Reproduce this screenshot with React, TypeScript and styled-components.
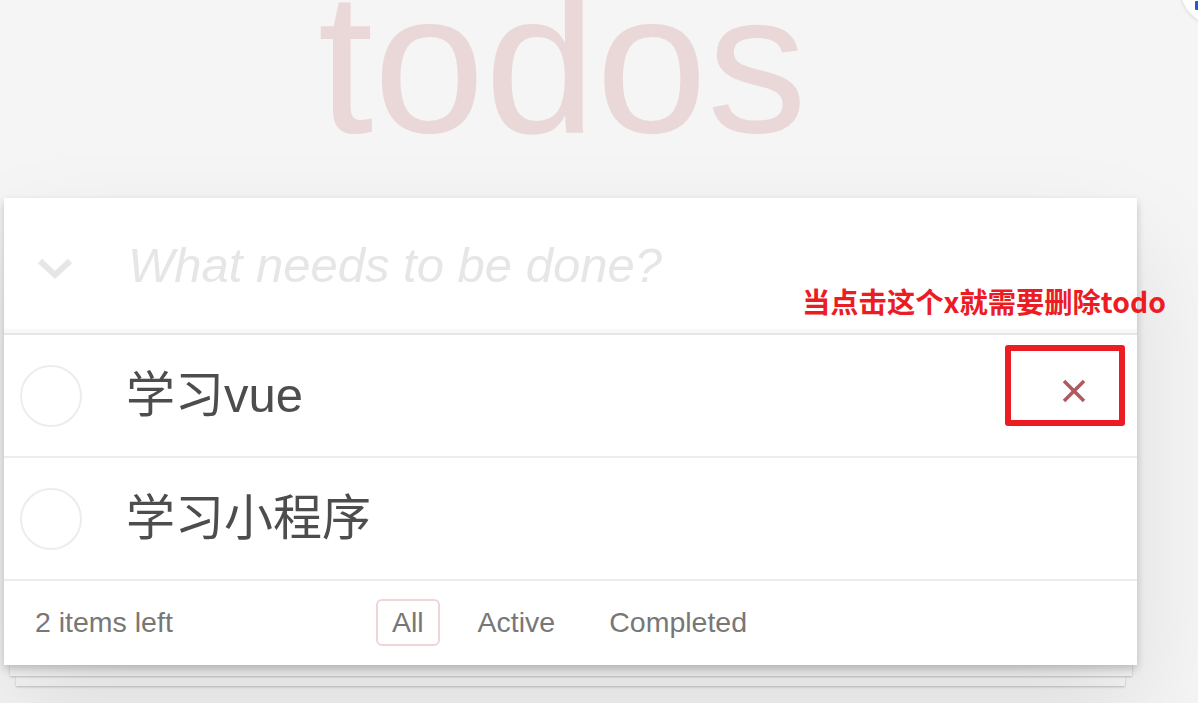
import React from "react";
import styled, { createGlobalStyle } from "styled-components";

const GlobalStyle = createGlobalStyle`
  html, body {
    margin: 0;
    padding: 0;
    background: #f5f5f5;
    overflow: hidden;
  }
  body {
    font-family: "Liberation Sans", Arial, "Noto Sans CJK SC", sans-serif;
    color: #4d4d4d;
  }
  * { box-sizing: border-box; }
`;

const Page = styled.div`
  position: relative;
  width: 1198px;
  height: 703px;
  padding-left: 4px;
  overflow: hidden;
`;

const Title = styled.h1`
  margin: 0 0 73px;
  width: 1133px;
  height: 125px;
  line-height: 125px;
  font-size: 200px;
  font-weight: 400;
  text-align: center;
  padding-right: 16px;
  color: rgba(175, 47, 47, 0.15);
  font-family: "Liberation Sans", Arial, sans-serif;
`;

const Card = styled.section`
  position: relative;
  z-index: 3;
  width: 1133px;
  background: #fff;
  box-shadow: 0 4px 8px rgba(0, 0, 0, 0.2), 0 50px 100px rgba(0, 0, 0, 0.1);
`;

const Header = styled.header`
  height: 135px;
  display: flex;
  align-items: center;
  box-shadow: inset 0 -4px 2px rgba(0, 0, 0, 0.03);
`;

const ToggleAll = styled.span`
  width: 124px;
  flex: none;
  display: flex;
  padding-left: 33px;
  padding-top: 6px;
`;

const NewTodo = styled.input`
  flex: 1;
  border: none;
  outline: none;
  background: transparent;
  padding: 0;
  font-family: "Liberation Sans", Arial, sans-serif;
  font-size: 49px;
  line-height: 1.4;
  color: #4d4d4d;
  &::placeholder {
    font-style: italic;
    color: #e6e6e6;
  }
`;

const List = styled.ul`
  list-style: none;
  margin: 0;
  padding: 0;
  border-top: 2px solid #e6e6e6;
`;

const Item = styled.li`
  height: 123px;
  border-bottom: 2px solid #ededed;
  display: flex;
  align-items: center;
  padding: 0 51px 0 16px;
`;

const Check = styled.span`
  width: 62px;
  height: 62px;
  flex: none;
  border: 2px solid #ededed;
  border-radius: 50%;
`;

const Label = styled.label`
  flex: 1;
  margin-left: 44px;
  font-size: 49px;
  line-height: 1.2;
  color: #4d4d4d;
  font-family: "Liberation Sans", Arial, "Noto Sans CJK SC", sans-serif;
`;

const Destroy = styled.button`
  border: none;
  background: none;
  padding: 0;
  margin: 0 0 10px;
  display: flex;
  cursor: pointer;
`;

const Footer = styled.footer`
  height: 84px;
  display: grid;
  grid-template-columns: 1fr auto 1fr;
  align-items: center;
  padding: 0 31px 2px;
  font-size: 28.5px;
  color: #777;
`;

const Count = styled.span`
  justify-self: start;
`;

const Filters = styled.ul`
  list-style: none;
  margin: 0 0 0 -2px;
  padding: 0;
  display: flex;
  gap: 22px;
`;

const FilterLink = styled.a<{ $selected?: boolean }>`
  display: block;
  padding: 5px 14px;
  line-height: 33px;
  border: 2px solid ${(p) => (p.$selected ? "rgba(175, 47, 47, 0.2)" : "transparent")};
  border-radius: 6px;
  color: #777;
  text-decoration: none;
`;

const Sheet = styled.div<{ $left: number; $width: number; $height: number; $z: number }>`
  position: relative;
  z-index: ${(p) => p.$z};
  margin-left: ${(p) => p.$left}px;
  width: ${(p) => p.$width}px;
  height: ${(p) => p.$height}px;
  background: #f7f7f7;
  box-shadow: 0 1px 2px rgba(0, 0, 0, 0.22);
`;

const MarkBox = styled.div`
  position: absolute;
  z-index: 10;
  left: 1005px;
  top: 345px;
  width: 120px;
  height: 81px;
  border: 6px solid #ec1c24;
  border-radius: 3px;
`;

const MarkText = styled.div`
  position: absolute;
  z-index: 10;
  left: 802px;
  top: 285px;
  font-family: "Noto Sans CJK SC", sans-serif;
  font-weight: 700;
  font-size: 28.3px;
  line-height: 32px;
  color: #ec1c24;
  white-space: nowrap;
`;

const Widget = styled.div`
  position: absolute;
  z-index: 10;
  left: 1181px;
  top: -44px;
  width: 68px;
  height: 68px;
  border-radius: 50%;
  background: #fff;
  box-shadow: 0 1px 4px rgba(0, 0, 0, 0.12);
`;

const WidgetMark = styled.span`
  position: absolute;
  left: 14px;
  top: 45px;
  width: 4px;
  height: 9px;
  background: #1d5fd0;
  border-radius: 1px;
`;

const Chevron = () => (
  <svg width="36" height="22" viewBox="0 0 36 22">
    <polyline points="3,3 18,17 33,3" fill="none" stroke="#e6e6e6" strokeWidth="6" />
  </svg>
);

const XIcon = () => (
  <svg width="24" height="24" viewBox="0 0 24 24">
    <line x1="2" y1="2" x2="22" y2="22" stroke="#af5b5e" strokeWidth="3.6" />
    <line x1="22" y1="2" x2="2" y2="22" stroke="#af5b5e" strokeWidth="3.6" />
  </svg>
);

const todos = [
  { id: 1, title: "学习vue", hover: true },
  { id: 2, title: "学习小程序", hover: false },
];

export default function App() {
  return (
    <>
      <GlobalStyle />
      <Page>
        <Title>todos</Title>
        <Card>
          <Header>
            <ToggleAll>
              <Chevron />
            </ToggleAll>
            <NewTodo placeholder="What needs to be done?" />
          </Header>
          <List>
            {todos.map((t) => (
              <Item key={t.id}>
                <Check />
                <Label>{t.title}</Label>
                {t.hover && (
                  <Destroy aria-label="delete">
                    <XIcon />
                  </Destroy>
                )}
              </Item>
            ))}
          </List>
          <Footer>
            <Count>2 items left</Count>
            <Filters>
              <li>
                <FilterLink $selected href="#/">All</FilterLink>
              </li>
              <li>
                <FilterLink href="#/active">Active</FilterLink>
              </li>
              <li>
                <FilterLink href="#/completed">Completed</FilterLink>
              </li>
            </Filters>
            <span />
          </Footer>
        </Card>
        <Sheet $left={6} $width={1122} $height={11} $z={2} />
        <Sheet $left={12} $width={1109} $height={10} $z={1} />
        <MarkText>当点击这个x就需要删除todo</MarkText>
        <MarkBox />
        <Widget>
          <WidgetMark />
        </Widget>
      </Page>
    </>
  );
}
